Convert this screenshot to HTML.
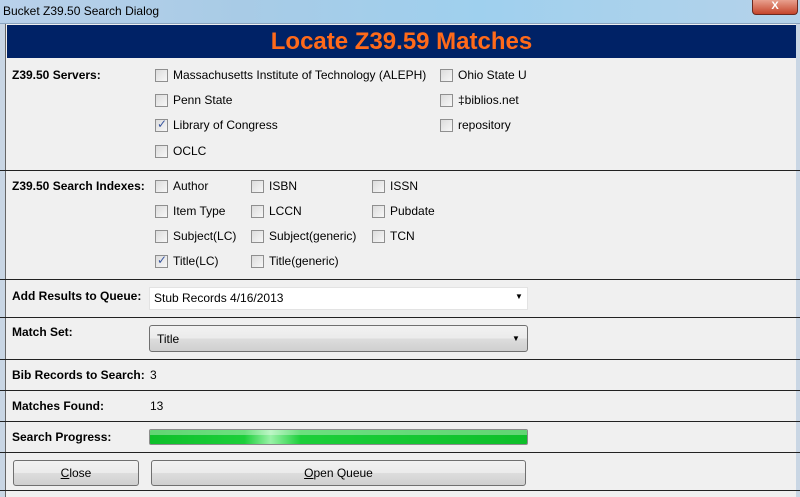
<!DOCTYPE html>
<html><head><meta charset="utf-8"><style>
*{margin:0;padding:0;box-sizing:border-box}
body{width:800px;height:497px;overflow:hidden;background:#f0f0f0;font-family:"Liberation Sans",sans-serif;font-size:12px;color:#000;position:relative}
.a{position:absolute;white-space:nowrap}
.tb{left:0;top:0;width:800px;height:24px;background:linear-gradient(90deg,#b9d1ea 0%,#a8cbe6 30%,#9fd0ee 60%,#b5d3ea 100%);border-bottom:1px solid #8aa4bf}
.hd{left:7px;top:25px;width:789px;height:33px;background:#002266;color:#ff6a1a;font-weight:bold;font-size:24px;text-align:center;line-height:33px}
.lb{font-weight:bold;left:12px}
.cb{width:13px;height:13px;border:1px solid #8f8f8f;background:linear-gradient(135deg,#dcdcdc,#f7f7f7)}
.cb.c::after{content:"✓";position:absolute;left:1px;top:-3px;font-size:12px;color:#3a57a0}
.ln{left:0;width:800px;height:1px;background:#222}
.btn{border:1px solid #707070;border-radius:3px;background:linear-gradient(#f2f2f2 0%,#ebebeb 50%,#dddddd 51%,#cfcfcf 100%);text-align:center}
</style></head><body>
<div class="a tb"></div>
<div class="a" style="left:3px;top:4px;font-size:12px">Bucket Z39.50 Search Dialog</div>
<div class="a" style="left:752px;top:0;width:46px;height:15px;border:1px solid #6b2a20;border-top:none;border-radius:0 0 4px 4px;background:linear-gradient(#e8a08e,#c5452b);color:#fff;font-weight:bold;text-align:center;font-size:11px;line-height:13px">X</div>
<div class="a" style="left:0;top:24px;width:6px;height:473px;background:#c9d6e4;border-right:1px solid #666"></div>
<div class="a" style="left:796px;top:24px;width:4px;height:473px;background:#c9d6e4"></div>
<div class="a hd">Locate Z39.59 Matches</div>

<div class="a lb" style="top:68px">Z39.50 Servers:</div>
<div class="a cb" style="left:155px;top:69px"></div><div class="a" style="left:173px;top:68px">Massachusetts Institute of Technology (ALEPH)</div>
<div class="a cb" style="left:155px;top:94px"></div><div class="a" style="left:173px;top:93px">Penn State</div>
<div class="a cb c" style="left:155px;top:119px"></div><div class="a" style="left:173px;top:118px">Library of Congress</div>
<div class="a cb" style="left:155px;top:145px"></div><div class="a" style="left:173px;top:144px">OCLC</div>
<div class="a cb" style="left:440px;top:69px"></div><div class="a" style="left:458px;top:68px">Ohio State U</div>
<div class="a cb" style="left:440px;top:94px"></div><div class="a" style="left:458px;top:93px">‡biblios.net</div>
<div class="a cb" style="left:440px;top:119px"></div><div class="a" style="left:458px;top:118px">repository</div>
<div class="a ln" style="top:170px"></div>

<div class="a lb" style="top:179px">Z39.50 Search Indexes:</div>
<div class="a cb" style="left:155px;top:180px"></div><div class="a" style="left:173px;top:179px">Author</div>
<div class="a cb" style="left:155px;top:205px"></div><div class="a" style="left:173px;top:204px">Item Type</div>
<div class="a cb" style="left:155px;top:230px"></div><div class="a" style="left:173px;top:229px">Subject(LC)</div>
<div class="a cb c" style="left:155px;top:255px"></div><div class="a" style="left:173px;top:254px">Title(LC)</div>
<div class="a cb" style="left:251px;top:180px"></div><div class="a" style="left:269px;top:179px">ISBN</div>
<div class="a cb" style="left:251px;top:205px"></div><div class="a" style="left:269px;top:204px">LCCN</div>
<div class="a cb" style="left:251px;top:230px"></div><div class="a" style="left:269px;top:229px">Subject(generic)</div>
<div class="a cb" style="left:251px;top:255px"></div><div class="a" style="left:269px;top:254px">Title(generic)</div>
<div class="a cb" style="left:372px;top:180px"></div><div class="a" style="left:390px;top:179px">ISSN</div>
<div class="a cb" style="left:372px;top:205px"></div><div class="a" style="left:390px;top:204px">Pubdate</div>
<div class="a cb" style="left:372px;top:230px"></div><div class="a" style="left:390px;top:229px">TCN</div>
<div class="a ln" style="top:279px"></div>

<div class="a lb" style="top:289px">Add Results to Queue:</div>
<div class="a" style="left:149px;top:287px;width:379px;height:23px;background:#fff;border:1px solid #e3e3e3"></div>
<div class="a" style="left:154px;top:291px">Stub Records 4/16/2013</div>
<div class="a" style="left:515px;top:292px;font-size:8px">▼</div>
<div class="a ln" style="top:317px"></div>

<div class="a lb" style="top:325px">Match Set:</div>
<div class="a btn" style="left:149px;top:325px;width:379px;height:27px"></div>
<div class="a" style="left:157px;top:332px">Title</div>
<div class="a" style="left:512px;top:334px;font-size:8px">▼</div>
<div class="a ln" style="top:359px"></div>

<div class="a lb" style="top:368px">Bib Records to Search:</div>
<div class="a" style="left:150px;top:368px">3</div>
<div class="a ln" style="top:390px"></div>

<div class="a lb" style="top:399px">Matches Found:</div>
<div class="a" style="left:150px;top:399px">13</div>
<div class="a ln" style="top:421px"></div>

<div class="a lb" style="top:430px">Search Progress:</div>
<div class="a" style="left:149px;top:429px;width:379px;height:16px;border:1px solid #8c8c8c;border-radius:2px;background:linear-gradient(90deg,#0ebf2a 0%,#1ccf3a 25%,#9af2a8 32%,#1ccf3a 40%,#0ebf2a 100%)"></div>
<div class="a" style="left:150px;top:430px;width:377px;height:5px;background:rgba(255,255,255,.35)"></div>
<div class="a ln" style="top:452px"></div>

<div class="a btn" style="left:13px;top:460px;width:126px;height:26px;line-height:24px"><u>C</u>lose</div>
<div class="a btn" style="left:151px;top:460px;width:375px;height:26px;line-height:24px"><u>O</u>pen Queue</div>
<div class="a ln" style="top:490px"></div>
</body></html>
